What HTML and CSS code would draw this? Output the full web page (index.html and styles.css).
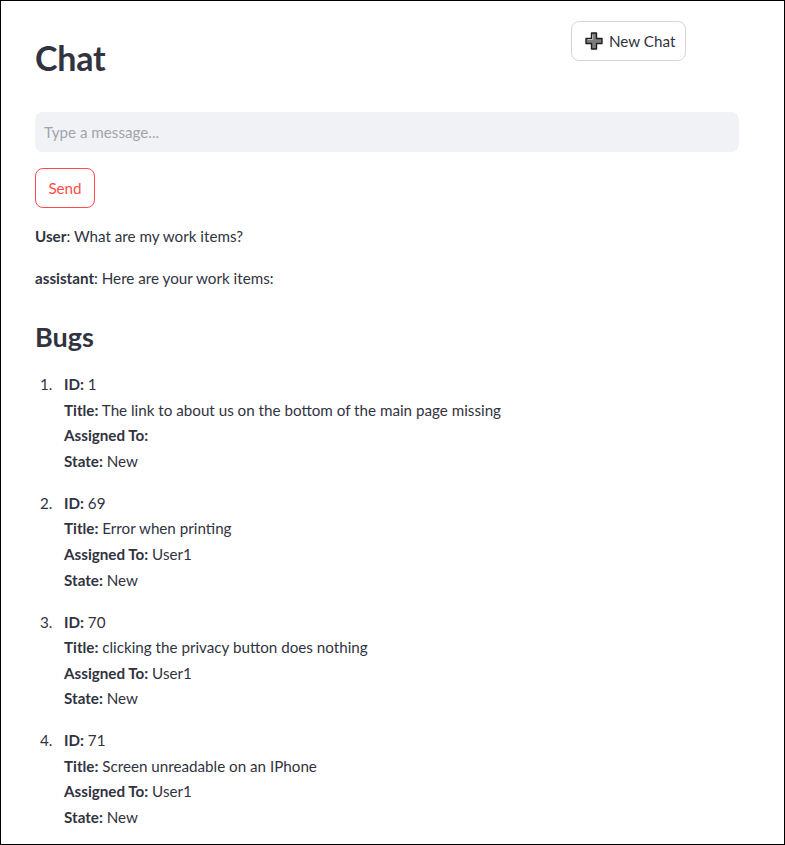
FILE: index.html
```html
<!DOCTYPE html>
<html>
<head>
<meta charset="utf-8">
<link rel="stylesheet" href="styles.css">
</head>
<body>
<main class="main">
  <header class="header">
    <h1 class="title">Chat</h1>
    <div class="header-side">
      <button class="btn btn-new">
        <svg class="plus" width="18" height="18" viewBox="0 0 18 18"><path d="M6.5 1h5v5.5H17v5h-5.5V17h-5v-5.5H1v-5h5.5z" fill="#7d7d7d" stroke="#1f1f1f" stroke-width="1.4" stroke-linejoin="round"/><path d="M7.6 2.6v4.9H2.6" fill="none" stroke="#bdbdbd" stroke-width="1"/></svg>
        <span>New Chat</span>
      </button>
    </div>
  </header>
  <div class="input-wrap"><input class="input" type="text" placeholder="Type a message..."></div>
  <button class="btn btn-send">Send</button>
  <p class="msg"><strong>User</strong>: What are my work items?</p>
  <p class="msg"><strong>assistant</strong>: Here are your work items:</p>
  <h2 class="subtitle">Bugs</h2>
  <ol class="items">
    <li><strong>ID:</strong> 1<br><strong>Title:</strong> The link to about us on the bottom of the main page missing<br><strong>Assigned To:</strong><br><strong>State:</strong> New</li>
    <li><strong>ID:</strong> 69<br><strong>Title:</strong> Error when printing<br><strong>Assigned To:</strong> User1<br><strong>State:</strong> New</li>
    <li><strong>ID:</strong> 70<br><strong>Title:</strong> clicking the privacy button does nothing<br><strong>Assigned To:</strong> User1<br><strong>State:</strong> New</li>
    <li><strong>ID:</strong> 71<br><strong>Title:</strong> Screen unreadable on an IPhone<br><strong>Assigned To:</strong> User1<br><strong>State:</strong> New</li>
  </ol>
</main>
</body>
</html>
```
FILE: styles.css
```css
* { box-sizing: border-box; }
html, body { margin: 0; padding: 0; }
body {
  width: 785px;
  height: 845px;
  border: 1px solid #000;
  overflow: hidden;
  background: #fff;
  color: #31333f;
  font-family: Lato, "Noto Sans", sans-serif;
  font-size: 15.2px;
}
.main {
  padding: 20px 45px 0 34px;
}
.header {
  display: grid;
  grid-template-columns: 520px 168px;
  column-gap: 16px;
  height: 91px;
}
.title {
  margin: 0;
  padding-top: 15px;
  font-size: 34px;
  font-weight: 700;
  line-height: 44px;
  letter-spacing: -0.2px;
}
.btn {
  font-family: inherit;
  font-size: 15.2px;
  background: #fff;
  border-radius: 8px;
  height: 40px;
  cursor: pointer;
  display: inline-flex;
  align-items: center;
  white-space: nowrap;
}
.btn-new {
  border: 1px solid #d5d6d9;
  color: #31333f;
  width: 115px;
  padding: 0 0 0 13px;
  gap: 6px;
}
.plus { flex: none; }
.input-wrap { margin-bottom: 16px; }
.input {
  display: block;
  width: 704px;
  height: 40px;
  border: none;
  border-radius: 8px;
  background: #f0f2f6;
  padding: 0 9px;
  font-family: inherit;
  font-size: 15.2px;
  color: #31333f;
}
.input::placeholder { color: #a3a4ab; }
.btn-send {
  border: 1px solid #ff4b4b;
  color: #ff4b4b;
  width: 60px;
  justify-content: center;
  padding: 0;
  margin-bottom: 16px;
}
.msg {
  margin: 0 0 16px;
  line-height: 25.6px;
}
.msg strong { font-weight: 700; }
.subtitle {
  margin: 28px 0 17px;
  font-size: 27px;
  font-weight: 700;
  line-height: 36px;
}
.items {
  margin: 0;
  padding-left: 29px;
  line-height: 25.6px;
  list-style: none;
  counter-reset: item;
}
.items li {
  margin-bottom: 16.3px;
  counter-increment: item;
}
.items li::before {
  content: counter(item) ".";
  display: inline-block;
  width: 24px;
  margin-left: -24px;
}
.items strong { font-weight: 700; }
```
